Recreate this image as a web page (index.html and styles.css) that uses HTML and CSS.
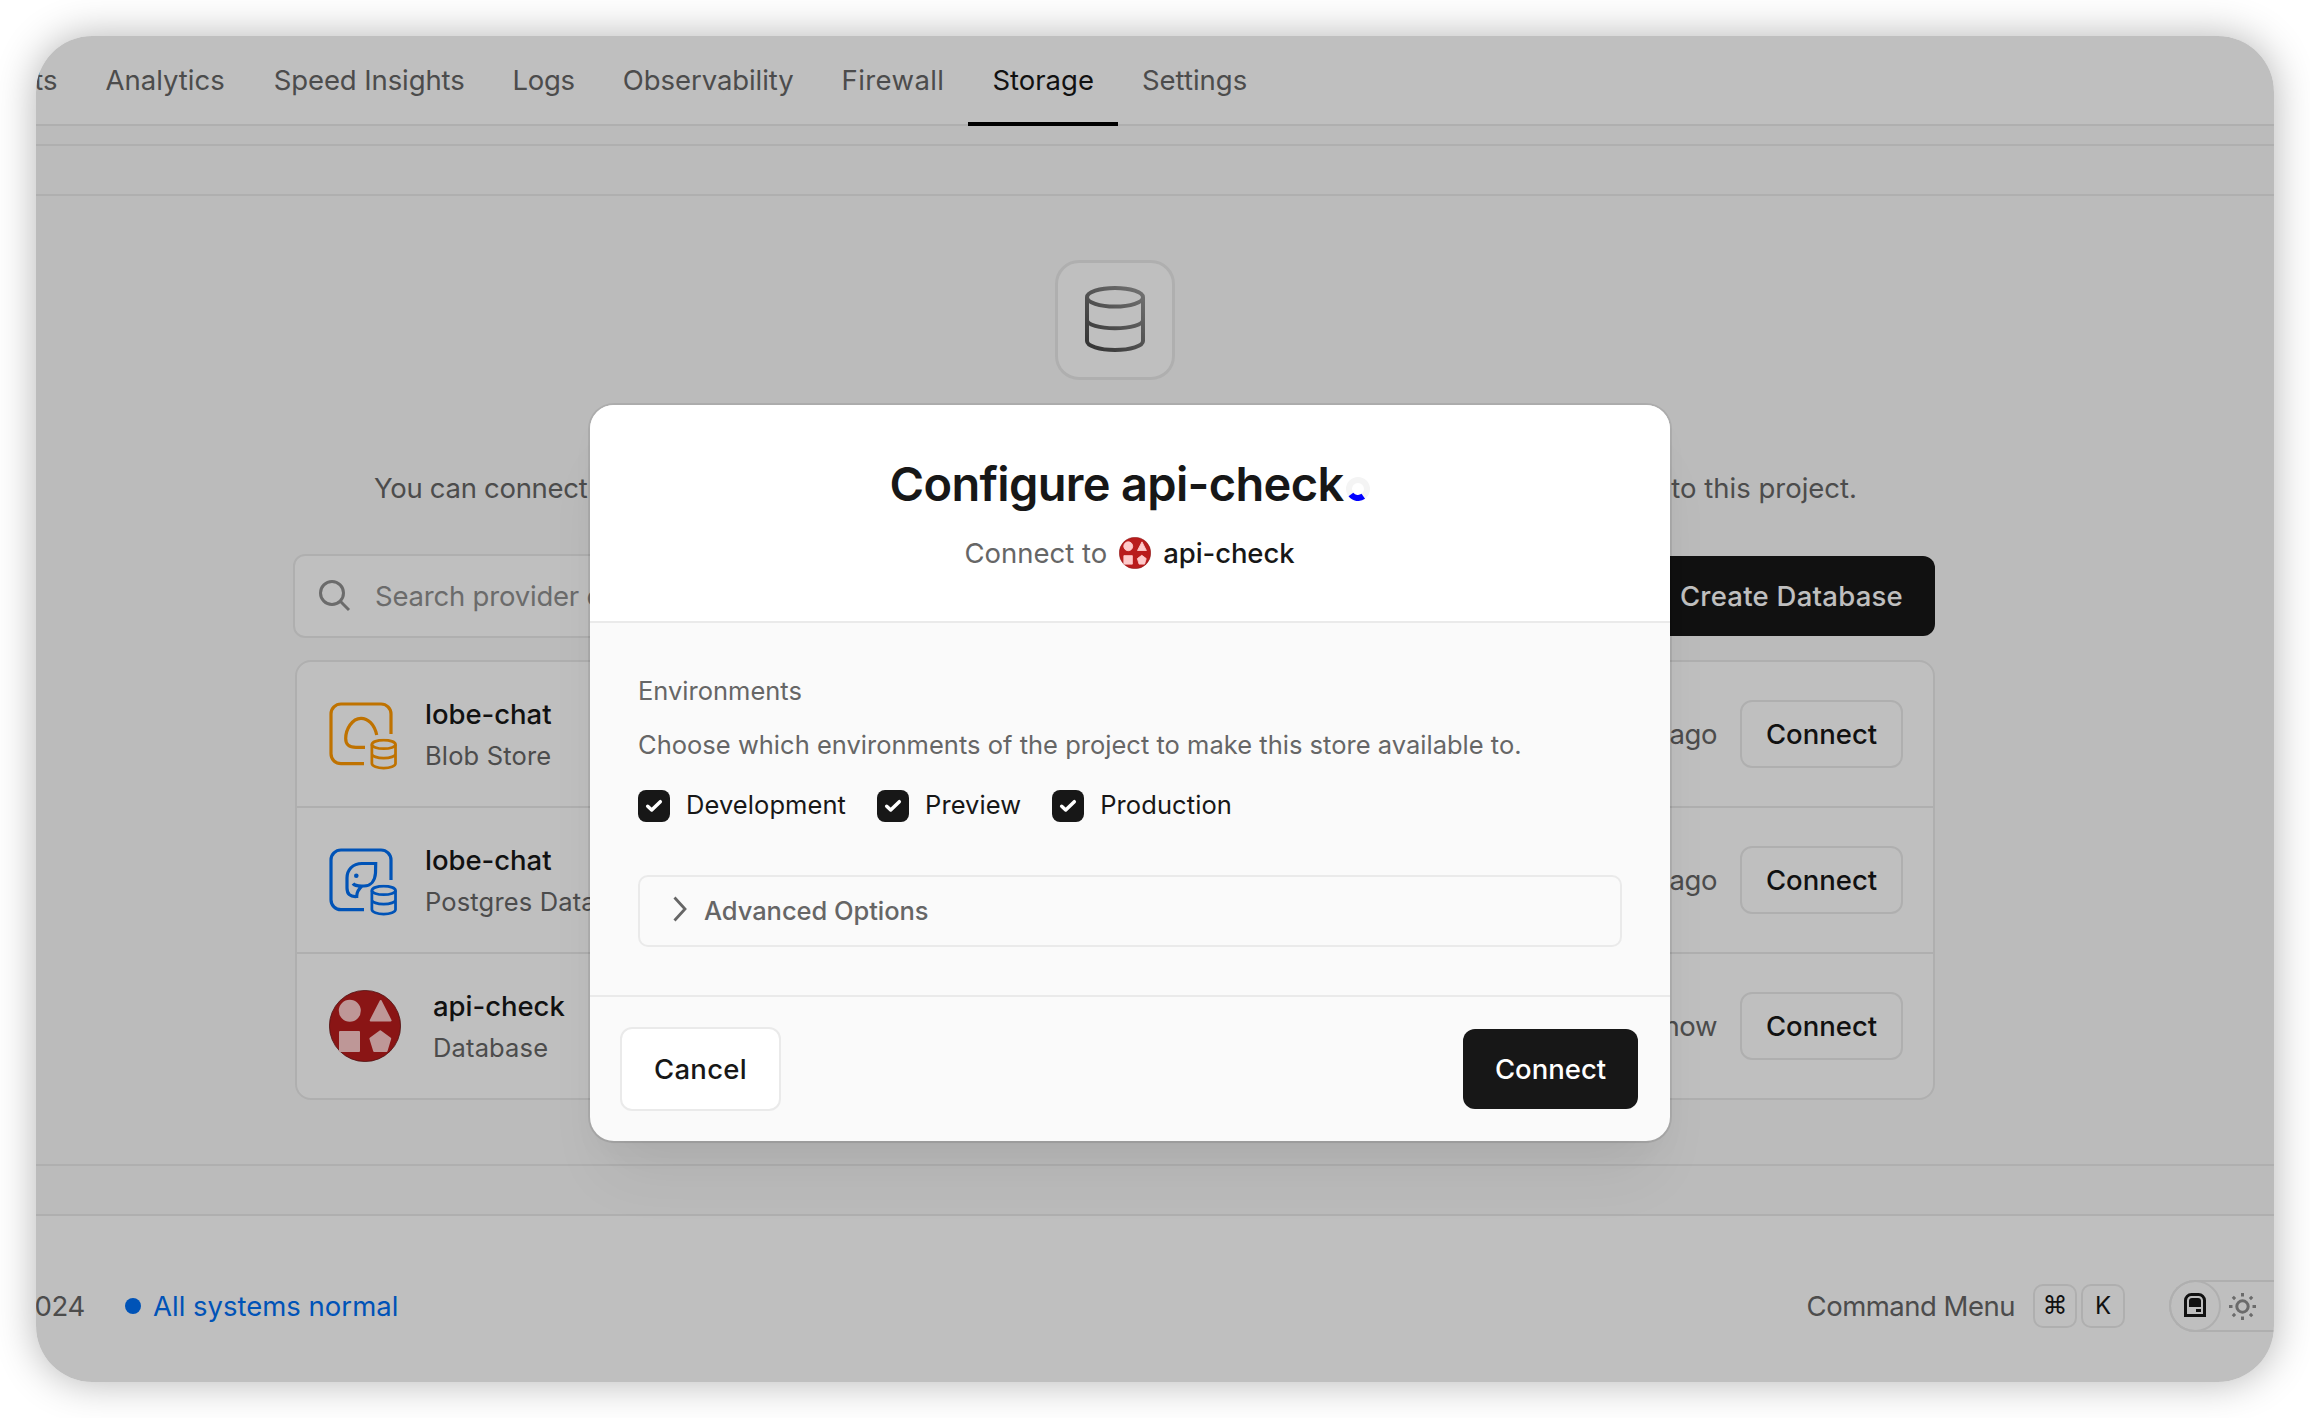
FILE: index.html
```
<!DOCTYPE html>
<html lang="en">
<head>
<meta charset="utf-8">
<title>Storage</title>
<link rel="stylesheet" href="styles.css">
</head>
<body>
<svg class="defs" width="0" height="0" aria-hidden="true">
  <symbol id="shapes" viewBox="0 0 72 72">
    <circle cx="36" cy="36" r="35.6" fill="#b91c1c" stroke="#6b1616" stroke-width="0.8"/>
    <g fill="#fecaca" stroke="#fecaca" stroke-width="2" stroke-linejoin="round">
      <circle cx="20.8" cy="20.8" r="10"/>
      <path d="M51.7 11 61.6 30.4H41.7Z"/>
      <rect x="11" y="42" width="19" height="19"/>
      <path d="M51.3 41.2 61.2 48.6 57.5 61H45.2L41.4 48.6Z"/>
    </g>
  </symbol>
  <symbol id="cylinder" viewBox="0 0 28 32">
    <g fill="none" stroke="currentColor" stroke-width="2.8">
      <ellipse cx="14" cy="6" rx="12" ry="4.4"/>
      <path d="M2 6V25.4C2 28 7.4 30 14 30S26 28 26 25.4V6M2 15.4C2 18 7.4 19.9 14 19.9S26 18 26 15.4"/>
    </g>
  </symbol>
</svg>

<div class="frame">
  <nav class="tabs">
    <span class="tab tab-first">ts</span>
    <span class="tab">Analytics</span>
    <span class="tab tab-speed">Speed Insights</span>
    <span class="tab tab-logs">Logs</span>
    <span class="tab tab-observability">Observability</span>
    <span class="tab tab-firewall">Firewall</span>
    <span class="tab tab-active">Storage</span>
    <span class="tab">Settings</span>
  </nav>
  <div class="strip strip-thin"></div>
  <div class="strip"></div>

  <main class="content">
    <div class="hero-icon">
      <svg width="60" height="66" viewBox="30 26 60 66" fill="none" stroke="url(#hero-gradient)" stroke-width="4">
        <defs>
          <linearGradient id="hero-gradient" gradientUnits="userSpaceOnUse" x1="30" y1="92" x2="88" y2="28">
            <stop offset="0" stop-color="#404040"/>
            <stop offset="1" stop-color="#999"/>
          </linearGradient>
        </defs>
        <ellipse cx="60" cy="37.3" rx="28" ry="9.3"/>
        <path d="M32 37.3V81C32 86 44.5 90 60 90S88 86 88 81V37.3M32 60C32 64.7 44.5 68.3 60 68.3S88 64.7 88 60"/>
      </svg>
    </div>

    <p class="intro"><span class="intro-start">You can connect</span><span>to this project.</span></p>

    <div class="toolbar">
      <div class="search">
        <svg width="32" height="32" fill="none" stroke="currentColor" stroke-width="3">
          <circle cx="13" cy="13" r="11.5"/><path d="M21.3 21.3 30 30"/>
        </svg>
        <span>Search provider o</span>
      </div>
      <div class="create">Create Database</div>
    </div>

    <ul class="stores">
      <li class="store">
        <svg class="store-icon blob" width="68" height="68" fill="none" stroke="currentColor" stroke-width="3.2">
          <path d="M62 32V12A10 10 0 0 0 52 2H12A10 10 0 0 0 2 12V51.7A10 10 0 0 0 12 61.7H35"/>
          <path d="M47.7 33C45.5 22.5 39 16.3 32 16.3 23 16.3 16.7 27.5 16.7 36.5 16.7 43 20 45.3 27 45.3H36"/>
          <use href="#cylinder" x="40.7" y="36.5" width="28" height="31.5"/>
        </svg>
        <div class="store-text"><b>lobe-chat</b><span>Blob Store</span></div>
        <span class="when">ago</span>
        <span class="connect">Connect</span>
      </li>
      <li class="store">
        <svg class="store-icon postgres" width="68" height="68" fill="none" stroke="currentColor" stroke-width="3.2">
          <path d="M62 32V12A10 10 0 0 0 52 2H12A10 10 0 0 0 2 12V51.7A10 10 0 0 0 12 61.7H35"/>
          <path d="M24 35.5C26 38.5 30 38 35 38 42 38 46 32.5 46.5 25L46.7 15.5H33C23.5 15.5 18 22 18 30V40C18 46 21 49 27.7 48.5 27.7 44 29 41.5 33 38"/>
          <circle cx="27.3" cy="27.7" r="2.3" fill="currentColor" stroke="none"/>
          <use href="#cylinder" x="40.7" y="36.5" width="28" height="31.5"/>
        </svg>
        <div class="store-text"><b>lobe-chat</b><span>Postgres Data</span></div>
        <span class="when">ago</span>
        <span class="connect">Connect</span>
      </li>
      <li class="store">
        <svg width="72" height="72"><use href="#shapes"/></svg>
        <div class="store-text store-text-wide"><b>api-check</b><span>Database</span></div>
        <span class="when">now</span>
        <span class="connect">Connect</span>
      </li>
    </ul>
  </main>

  <div class="strip strip-bottom"></div>

  <footer class="footer">
    <span class="year">024</span>
    <span class="dot"></span>
    <span class="status">All systems normal</span>
    <span class="command">Command Menu</span>
    <span class="key key-symbol">⌘</span>
    <span class="key">K</span>
    <div class="theme">
      <div class="theme-current">
        <svg width="22" height="24" fill="currentColor">
          <path d="M1.5 22.5V7.5A6 6 0 0 1 7.5 1.5H14.5A6 6 0 0 1 20.5 7.5V22.5Z" fill="none" stroke="currentColor" stroke-width="3"/>
          <path d="M5 14V8A3 3 0 0 1 8 5H14A3 3 0 0 1 17 8V14Z"/>
          <path d="M12 16H17V19H12Z"/>
        </svg>
      </div>
      <svg class="sun" width="27" height="27" viewBox="-13.5 -13.5 27 27" fill="none" stroke="currentColor" stroke-width="3">
        <circle r="5.7"/>
        <path d="M0-13.5V-10M0 13.5V10M-13.5 0H-10M13.5 0H10M-9.7-9.7-7.4-7.4M9.7 9.7 7.4 7.4M-9.7 9.7-7.4 7.4M9.7-9.7 7.4-7.4"/>
      </svg>
    </div>
  </footer>

  <div class="overlay"></div>

  <section class="modal">
    <header class="modal-head">
      <h1>Configure api-check<svg class="spinner" width="24" height="24" fill="none" stroke-width="6">
        <circle cx="12" cy="12" r="9" stroke="#f4f4f4"/>
        <path d="M17.3 19.3A9 9 0 0 1 4.900 17.5" stroke="#00f"/>
      </svg></h1>
      <p>Connect to <svg width="32" height="32"><use href="#shapes"/></svg> <b>api-check</b></p>
    </header>
    <div class="modal-body">
      <p>Environments</p>
      <p class="hint">Choose which environments of the project to make this store available to.</p>
      <div class="checks">
        <label><svg class="box" width="32" height="32"><path d="M9.7 16.3 13.7 20 22.3 11.7"/></svg><span>Development</span></label>
        <label><svg class="box" width="32" height="32"><path d="M9.7 16.3 13.7 20 22.3 11.7"/></svg><span>Preview</span></label>
        <label><svg class="box" width="32" height="32"><path d="M9.7 16.3 13.7 20 22.3 11.7"/></svg><span>Production</span></label>
      </div>
      <div class="advanced">
        <svg width="14" height="26" fill="none" stroke="currentColor" stroke-width="2.8"><path d="M1.5 1.5 12 13 1.5 24.5"/></svg>
        <span>Advanced Options</span>
      </div>
    </div>
    <footer class="modal-foot">
      <span class="button cancel">Cancel</span>
      <span class="button confirm">Connect</span>
    </footer>
  </section>
</div>
</body>
</html>
```
FILE: styles.css
```
* { box-sizing: border-box; margin: 0; padding: 0; }
body {
  width: 2310px;
  height: 1418px;
  padding: 36px;
  overflow: hidden;
  background: #fff;
  font: 27.5px/40px Inter, "Liberation Sans", sans-serif;
  color: #666;
}
b { font-weight: 500; color: #171717; }
svg { display: block; flex: none; }
.defs { position: absolute; }

.frame {
  position: relative;
  width: 2238px;
  height: 1346px;
  border-radius: 56px;
  background: #fafafa;
  box-shadow: 0 0 40px rgba(0, 0, 0, .3);
  display: flex;
  flex-direction: column;
}

/* Navigation */
.tabs {
  display: flex;
  height: 90px;
  line-height: 88px;
  background: #fff;
  border-bottom: 2px solid #eaeaea;
  clip-path: inset(0 0 -2px 0 round 56px 56px 0 0);
}
.tab { height: 90px; padding: 0 24px; white-space: nowrap; }
.tab-first { width: 45.5px; padding: 0 24px 0 0; display: flex; justify-content: flex-end; }
.tab-speed { margin-left: 1px; letter-spacing: -.1px; }
.tab-logs { letter-spacing: -.3px; }
.tab-observability { letter-spacing: -.08px; }
.tab-firewall { letter-spacing: .4px; }
.tab-active { color: #171717; border-bottom: 4px solid #000; }
.strip { height: 50px; border-bottom: 2px solid #eaeaea; }
.strip-thin { height: 20px; }

/* Store list */
.content { width: 1640px; margin-left: 259px; padding: 64px 0; }
.hero-icon {
  width: 120px;
  height: 120px;
  margin: 0 auto;
  border: 3px solid #eaeaea;
  border-radius: 24px;
  background: #fff;
  display: grid;
  place-items: center;
  padding-bottom: 2px;
}
.intro {
  display: flex;
  justify-content: space-between;
  margin-top: 88px;
  padding: 0 78px 0 79px;
}
.intro-start { letter-spacing: -.3px; }
.toolbar {
  display: flex;
  justify-content: space-between;
  align-items: center;
  margin: 46px 0 0 -2px;
}
.search {
  width: 1000px;
  height: 84px;
  border: 2px solid #eaeaea;
  border-radius: 12px;
  background: #fff;
  color: #8f8f8f;
  display: flex;
  align-items: center;
  gap: 24px;
  padding-left: 24px;
  letter-spacing: -.2px;
}
.create {
  height: 80px;
  padding: 0 32px;
  line-height: 80px;
  border-radius: 12px;
  background: #171717;
  color: #fff;
  font-weight: 500;
  letter-spacing: .25px;
}
.stores {
  margin-top: 22px;
  border: 2px solid #eaeaea;
  border-radius: 16px;
  background: #fff;
  list-style: none;
}
.store {
  display: flex;
  align-items: center;
  height: 144px;
  padding: 0 30px 0 32px;
}
.store + .store { height: 146px; border-top: 2px solid #eaeaea; }
.store-icon { margin-top: 4px; overflow: visible; }
.blob { color: #f90; }
.postgres { color: #006ff5; }
.store-text {
  display: flex;
  flex-direction: column;
  gap: 6px;
  margin-left: 28px;
  padding-top: 2px;
  line-height: 36px;
}
.store-text b { letter-spacing: -.03px; }
.store-text-wide { margin-left: 32px; }
.store-text span { font-size: 25.5px; letter-spacing: .15px; }
.when { margin-left: auto; letter-spacing: -.4px; }
.connect {
  width: 163px;
  height: 68px;
  margin-left: 23px;
  border: 2px solid #eaeaea;
  border-radius: 12px;
  color: #171717;
  font-weight: 500;
  line-height: 64px;
  text-align: center;
}

/* Footer */
.strip-bottom { height: 52px; border-top: 2px solid #eaeaea; }
.footer {
  flex: 1;
  display: flex;
  align-items: center;
  padding-top: 14px;
  background: #fff;
  border-radius: 0 0 56px 56px;
  overflow: hidden;
}
.year { width: 49px; display: flex; justify-content: flex-end; letter-spacing: -.3px; }
.dot { width: 16px; height: 16px; margin: 0 12px 0 40px; border-radius: 50%; background: #006ff5; }
.status { color: #006ff5; }
.command { margin-left: auto; letter-spacing: -.5px; }
.key {
  width: 44px;
  height: 44px;
  margin-left: 4px;
  border: 2px solid #eaeaea;
  border-radius: 10px;
  color: #171717;
  font-size: 24px;
  line-height: 40px;
  text-align: center;
}
.key-symbol { margin-left: 18px; font-family: "DejaVu Sans", sans-serif; font-size: 25px; }
.theme {
  width: 105px;
  height: 52px;
  margin-left: 44px;
  display: flex;
  align-items: center;
  border: 2px solid #eaeaea;
  border-right: 0;
  border-radius: 26px 0 0 26px;
  color: #8f8f8f;
}
.theme-current {
  width: 52px;
  height: 52px;
  margin-left: -2px;
  padding-bottom: 3px;
  border: 2px solid #eaeaea;
  border-radius: 50%;
  color: #171717;
  display: grid;
  place-items: center;
}
.sun { margin-left: 8px; }

/* Dialog */
.overlay {
  position: absolute;
  inset: 0;
  border-radius: 56px;
  background: rgba(0, 0, 0, .25);
}
.modal {
  position: absolute;
  left: 554px;
  top: 369px;
  width: 1080px;
  height: 736px;
  display: flex;
  flex-direction: column;
  border-radius: 24px;
  background: #fafafa;
  box-shadow:
    0 0 0 2px rgba(0, 0, 0, .08),
    0 2px 2px rgba(0, 0, 0, .02),
    0 16px 32px -8px rgba(0, 0, 0, .04),
    0 48px 64px -16px rgba(0, 0, 0, .06);
}
.modal-head {
  height: 218px;
  padding-top: 49px;
  border-bottom: 2px solid #eaeaea;
  border-radius: 24px 24px 0 0;
  background: #fff;
}
.modal-head h1 {
  display: flex;
  justify-content: center;
  align-items: center;
  color: #171717;
  font-size: 47px;
  font-weight: 600;
  line-height: 60px;
  letter-spacing: -.68px;
}
.spinner { margin: 10px 0 0 3px; }
.modal-head p {
  display: flex;
  justify-content: center;
  align-items: center;
  gap: 12px;
  margin-top: 19px;
  padding-right: 1px;
}
.modal-head b { letter-spacing: -.1px; }
.modal-body { height: 374px; padding: 48px; border-bottom: 2px solid #eaeaea; font-size: 25.5px; }
.hint { margin-top: 14px; letter-spacing: .015px; }
.checks { display: flex; gap: 31px; margin-top: 25px; color: #171717; line-height: 30px; }
.checks label { display: flex; gap: 16px; letter-spacing: .08px; }
.box {
  border-radius: 8px;
  background: #171717;
  fill: none;
  stroke: #fff;
  stroke-width: 3.5;
  stroke-linecap: round;
  stroke-linejoin: round;
}
.advanced {
  display: flex;
  align-items: center;
  height: 72px;
  margin-top: 53px;
  padding-left: 33px;
  border: 2px solid #eaeaea;
  border-radius: 10px;
  font-weight: 500;
  letter-spacing: -.05px;
}
.advanced svg { margin: -4px 17px 0 0; }
.modal-foot {
  flex: 1;
  display: flex;
  align-items: center;
  justify-content: space-between;
  padding: 0 32px 0 30px;
}
.button { border-radius: 12px; font-weight: 500; text-align: center; }
.cancel {
  width: 161px;
  height: 84px;
  border: 2px solid #eaeaea;
  background: #fff;
  color: #171717;
  line-height: 80px;
  letter-spacing: .3px;
}
.confirm { width: 175px; height: 80px; background: #171717; color: #fff; line-height: 80px; }
```
